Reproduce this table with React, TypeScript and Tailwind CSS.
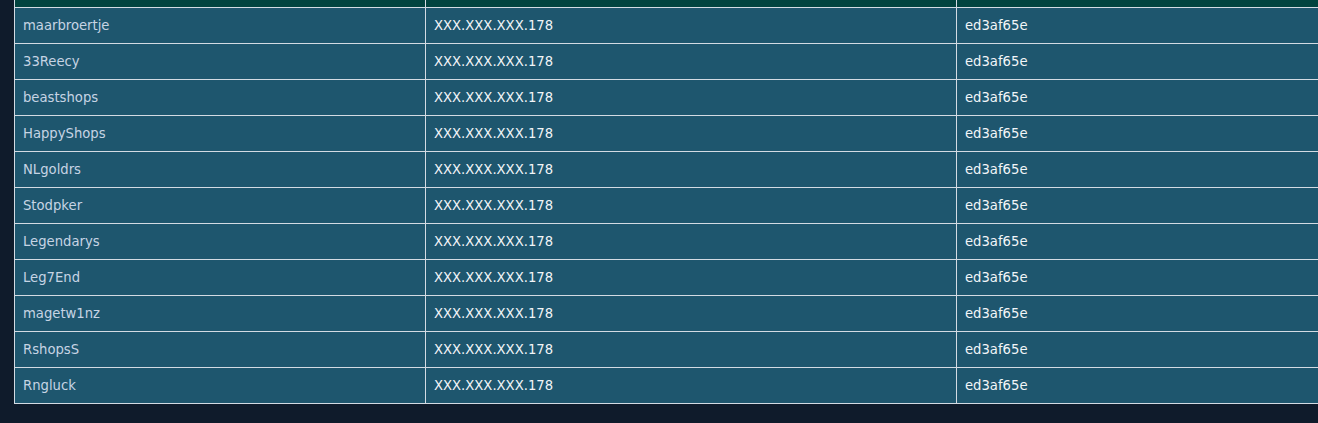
const rows = [
  "maarbroertje",
  "33Reecy",
  "beastshops",
  "HappyShops",
  "NLgoldrs",
  "Stodpker",
  "Legendarys",
  "Leg7End",
  "magetw1nz",
  "RshopsS",
  "Rngluck",
];

export default function App() {
  return (
    <div className="h-[423px] w-[1318px] overflow-hidden bg-[#0f1b2b] pl-[14px] font-['DejaVu_Sans',sans-serif] text-[13.2px]">
      <table className="w-[1340px] table-fixed border-collapse">
        <colgroup>
          <col className="w-[411px]" />
          <col className="w-[531px]" />
          <col />
        </colgroup>
        <thead>
          <tr className="h-[7px] bg-[#01433f]">
            <th className="border border-t-0 border-[#d3dbe3] p-0"></th>
            <th className="border border-t-0 border-[#d3dbe3] p-0"></th>
            <th className="border border-t-0 border-[#d3dbe3] p-0"></th>
          </tr>
        </thead>
        <tbody>
          {rows.map((name) => (
            <tr key={name} className="h-[36px] bg-[#1e566e]">
              <td className="border border-[#d3dbe3] px-[8px] pt-[2px] pb-0 text-[#c6d4e4]">{name}</td>
              <td className="border border-[#d3dbe3] px-[8px] pt-[2px] pb-0 text-[#f2f5f8]">XXX.XXX.XXX.178</td>
              <td className="border border-[#d3dbe3] px-[8px] pt-[2px] pb-0 text-[#f2f5f8]">ed3af65e</td>
            </tr>
          ))}
        </tbody>
      </table>
    </div>
  );
}
